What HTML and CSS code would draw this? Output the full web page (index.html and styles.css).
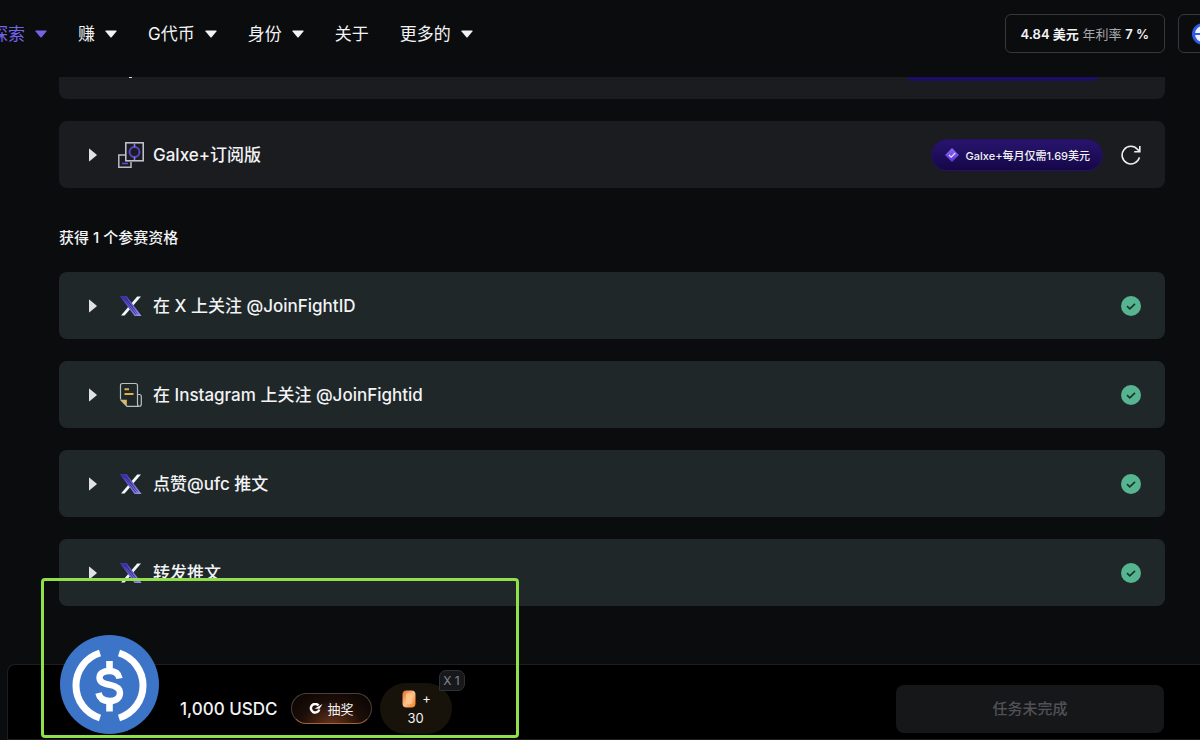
FILE: index.html
```html
<!DOCTYPE html>
<html lang="zh-CN">
<head>
<meta charset="utf-8">
<meta name="viewport" content="width=device-width, initial-scale=1">
<title>Galxe</title>
<link rel="stylesheet" href="styles.css">
</head>
<body>
<svg class="defs" aria-hidden="true">
  <defs>
    <linearGradient id="violet" x1="0" y1="0" x2="1" y2="1">
      <stop offset="0" stop-color="#3a2fae"/><stop offset="1" stop-color="#9a8df0"/>
    </linearGradient>
    <linearGradient id="gem" x1="0" y1="0" x2="0" y2="1">
      <stop offset="0" stop-color="#8a68f5"/><stop offset="1" stop-color="#5a35d8"/>
    </linearGradient>
    <linearGradient id="gold" x1="0" y1="0" x2="1" y2="1">
      <stop offset="0" stop-color="#e8682a"/><stop offset=".5" stop-color="#fcc088"/><stop offset="1" stop-color="#f07a1c"/>
    </linearGradient>
    <symbol id="caret-down" viewBox="0 0 12 8"><path d="M1 .6h10q1 0 .4.8L6.600 7.200q-.6.700-1.200 0L.6 1.400Q0 .6 1 .6z" fill="currentColor"/></symbol>
    <symbol id="caret-right" viewBox="0 0 8 14"><path d="M0 1.200q0-1 .8-.3l6.700 5.500q.6.600 0 1.200L.8 13.100q-.8.700-.8-.3z" fill="currentColor"/></symbol>
    <symbol id="x-logo" viewBox="0 0 22 22">
      <path d="M17.200 1.500H21L4.600 20.500H1z" fill="#f4f6fa"/>
      <path d="M1.200 1.800H6.200L20 20.300H15z" fill="#2c2a78" stroke="url(#violet)" stroke-width="1.600"/>
      <path d="M3.600 2.500L17.600 20" stroke="url(#violet)" stroke-width="1.200"/>
    </symbol>
    <symbol id="done" viewBox="0 0 20 20">
      <circle cx="10" cy="10" r="10" fill="#56b491"/>
      <path d="M6 10.200l2.800 2.700 5.200-5" fill="none" stroke="#17352b" stroke-width="1.600"/>
    </symbol>
  </defs>
</svg>

<header class="topbar">
  <nav class="nav">
    <a class="nav-link nav-link--active" href="#">探索<svg class="caret-down"><use href="#caret-down"/></svg></a>
    <a class="nav-link" href="#">赚<svg class="caret-down"><use href="#caret-down"/></svg></a>
    <a class="nav-link" href="#">G代币<svg class="caret-down"><use href="#caret-down"/></svg></a>
    <a class="nav-link" href="#">身份<svg class="caret-down"><use href="#caret-down"/></svg></a>
    <a class="nav-link" href="#">关于</a>
    <a class="nav-link" href="#">更多的<svg class="caret-down"><use href="#caret-down"/></svg></a>
  </nav>
  <div class="account">
    <button class="box-button" type="button"><b>4.84 美元</b> <span>年利率</span> <b>7 %</b></button>
    <button class="box-button box-button--chain" type="button" aria-label="Base">
      <svg class="chain" viewBox="0 0 22 22"><circle cx="11" cy="11" r="9.500" fill="#f1f3ff" stroke="#2f5be8" stroke-width="3"/><path d="M2 11h18" stroke="#2f5be8" stroke-width="2"/></svg>
    </button>
  </div>
</header>

<main class="tasks">
  <section class="card card--cut"><span class="icon-tip"></span><span class="pill-edge"></span></section>

  <section class="card">
    <button class="toggle" type="button">
      <svg class="caret-right"><use href="#caret-right"/></svg>
      <svg class="icon" viewBox="0 0 28 28" fill="none">
        <path d="M8.500 14H1.800V26.200H14V21" stroke="#b9b9c8" stroke-width="1.500"/>
        <path d="M5 22.500h6" stroke="#5a4ddb" stroke-width="1.500"/>
        <rect x="8.800" y="1.800" width="17.400" height="18" stroke="#c9c9d6" stroke-width="1.500"/>
        <circle cx="17.500" cy="11" r="5" stroke="#5548cf" stroke-width="1.900"/>
        <path d="M17.500 2.500v3.500M17.500 16v3" stroke="#8a80e8" stroke-width="1.500"/>
      </svg>
      <span>Galxe+订阅版</span>
    </button>
    <div class="card-actions">
      <a class="pill" href="#">
        <svg class="gem" viewBox="0 0 14 14"><path d="M7 0l7 7-7 7-7-7z" fill="url(#gem)"/><path d="M4 7l2.200 2.200L10.200 5" fill="none" stroke="#e4dcff" stroke-width="1.200"/></svg>
        <span>Galxe+每月仅需1.69美元</span>
      </a>
      <button class="refresh" type="button" aria-label="刷新">
        <svg viewBox="0 0 20 20" fill="none" stroke="#eeeef2" stroke-width="1.600"><path d="M18.400 12.400A8.800 8.800 0 1 1 16.600 4.400L18.500 6.500"/><path d="M18.800 1v5.700h-5.600"/></svg>
      </button>
    </div>
  </section>

  <h2 class="section-title">获得 1 个参赛资格</h2>

  <div class="done-list">
    <section class="card card--done">
      <button class="toggle" type="button"><svg class="caret-right"><use href="#caret-right"/></svg><svg class="icon icon--x"><use href="#x-logo"/></svg><span>在 X 上关注 @JoinFightID</span></button>
      <svg class="done"><use href="#done"/></svg>
    </section>
    <section class="card card--done">
      <button class="toggle" type="button"><svg class="caret-right"><use href="#caret-right"/></svg>
        <svg class="icon" viewBox="0 0 28 28" fill="none">
          <path d="M3.500 18V4.500Q3.500 2.500 5.500 2.500H18.500Q20.500 2.500 20.500 4.500V23Q20.500 25.300 22.300 25.300H10L3.500 18.500" stroke="#b9c0c2" stroke-width="1.200"/>
          <path d="M20.500 13.500H22.500Q24.300 13.500 24.300 15.500V23Q24.300 25.300 22.300 25.300" stroke="#b9c0c2" stroke-width="1.200"/>
          <path d="M4 18.800h5.800V25z" fill="#e0b95c"/>
          <path d="M7.500 8.300h4.500M7.500 13h9" stroke="#e0b050" stroke-width="2"/>
        </svg><span>在 Instagram 上关注 @JoinFightid</span></button>
      <svg class="done"><use href="#done"/></svg>
    </section>
    <section class="card card--done">
      <button class="toggle" type="button"><svg class="caret-right"><use href="#caret-right"/></svg><svg class="icon icon--x"><use href="#x-logo"/></svg><span>点赞@ufc 推文</span></button>
      <svg class="done"><use href="#done"/></svg>
    </section>
    <section class="card card--done">
      <button class="toggle" type="button"><svg class="caret-right"><use href="#caret-right"/></svg><svg class="icon icon--x"><use href="#x-logo"/></svg><span>转发推文</span></button>
      <svg class="done"><use href="#done"/></svg>
    </section>
  </div>
</main>

<footer class="rewards">
  <svg class="coin" viewBox="0 0 99 99" fill="none" stroke="#fff" stroke-width="7">
    <circle cx="49.500" cy="49.500" r="49.500" fill="#3c75c8" stroke="none"/>
    <path d="M40 18A34 34 0 0 0 40 83M59 18A34 34 0 0 1 59 83"/>
    <path d="M59.500 43.500C58.500 38 55 36 49.500 36C43.500 36 39.500 38.500 39.500 42.800C39.500 47.500 44 48.500 50 49.800C56 51 60 52.800 60 57.800C60 63 56 66 49.500 66C43 66 39.500 63 38.500 58" stroke-width="6.400"/>
    <path d="M49.500 26v9M49.500 67v9.500" stroke-width="6.600"/>
  </svg>
  <strong class="amount">1,000 USDC</strong>
  <button class="raffle" type="button">
    <svg viewBox="0 0 14 12" fill="none" stroke="#fff"><path d="M9.500 2.500A4.300 4.300 0 1 0 10.300 6.500" stroke-width="2.500"/><path d="M5.500 5.800L13.500 1 10.500 5.800z" fill="#fff" stroke="none"/></svg>
    <span>抽奖</span>
  </button>
  <div class="points">
    <div class="points-top"><svg viewBox="0 0 14 18"><rect x=".5" y=".5" width="13" height="17" rx="4" fill="url(#gold)"/><rect x="4" y="3" width="6.500" height="11" rx="2" fill="#ffc98f" opacity=".7"/></svg><span>+</span></div>
    <span>30</span>
    <span class="multiplier">X 1</span>
  </div>
  <button class="submit" type="button" disabled>任务未完成</button>
</footer>
<div class="highlight"></div>
</body>
</html>
```
FILE: styles.css
```css
* { box-sizing: border-box; }

body {
  margin: 0;
  min-height: 100vh;
  display: flex;
  flex-direction: column;
  position: relative;
  overflow: hidden;
  background: #0b0c0e;
  color: #f2f3f5;
  font-family: Inter, "Noto Sans CJK SC", sans-serif;
  font-size: 17px;
}

svg { display: block; flex: none; }
button { font: inherit; color: inherit; background: none; border: 0; padding: 0; margin: 0; }
a { color: inherit; text-decoration: none; }
.defs { position: absolute; width: 0; height: 0; }

/* Top bar */
.topbar {
  height: 77px;
  padding-bottom: 10px;
  display: flex;
  align-items: center;
  justify-content: space-between;
}
.nav { display: flex; gap: 31px; margin-left: -9px; line-height: 24px; white-space: nowrap; }
.nav-link { display: flex; align-items: center; gap: 10px; }
.nav-link--active { color: #7464e8; }
.caret-down { width: 12px; height: 8px; }
.account { display: flex; gap: 13px; margin-right: -32px; }
.box-button {
  height: 39px;
  padding: 0 15px;
  border: 1px solid #37383c;
  border-radius: 6px;
  font-size: 13px;
  white-space: nowrap;
}
.box-button b { font-weight: 600; }
.box-button span { color: #a6a7ad; }
.box-button--chain { width: 54px; padding: 0 13px; }
.chain { width: 22px; height: 22px; }

/* Task cards */
.tasks { flex: 1; padding: 0 35px 58px 59px; }
.card {
  min-height: 67px;
  padding: 0 24px 0 30px;
  display: flex;
  align-items: center;
  justify-content: space-between;
  border-radius: 8px;
  background: #1b1c20;
}
.card--cut {
  min-height: 22px;
  margin-bottom: 22px;
  padding: 0 67px 0 70px;
  align-items: flex-start;
  border-radius: 0 0 8px 8px;
}
.icon-tip { width: 3px; height: 1px; background: #d8d8e0; }
.pill-edge { width: 190px; height: 4px; border-radius: 0 0 16px 16px; background: #1c0d62; }
.card--done { background: #1f2729; }
.toggle { display: flex; align-items: center; font-weight: 500; line-height: 24px; text-align: left; }
.caret-right { width: 8px; height: 14px; margin-right: 20px; color: #dfe1e6; }
.icon { width: 28px; height: 28px; margin-right: 8px; }
.icon--x { padding: 3px; }
.done { width: 20px; height: 20px; }
.card-actions { display: flex; align-items: center; gap: 18px; }
.pill {
  height: 32px;
  padding: 0 12px 0 13px;
  display: flex;
  align-items: center;
  gap: 7px;
  border: 1px solid #241260;
  border-radius: 16px;
  background: linear-gradient(#28146e, #150748);
  font-size: 11px;
  font-weight: 500;
  white-space: nowrap;
}
.gem { width: 14px; height: 14px; }
.refresh svg { width: 20px; height: 20px; }
.section-title { margin: 38px 0 22px; font-size: 15px; line-height: 24px; font-weight: 500; }
.done-list { display: grid; gap: 22px; }

/* Reward bar */
.rewards {
  height: 76px;
  margin-left: 7px;
  padding: 0 36px 0 52px;
  display: flex;
  align-items: flex-end;
  border: 1px solid #1d1e20;
  border-right: 0;
  border-radius: 8px 0 0 0;
  background: #000;
}
.coin { width: 99px; height: 99px; margin-bottom: 5px; }
.amount { margin: 0 13px 18px 21px; font-weight: 500; line-height: 24px; }
.raffle {
  height: 31px;
  margin-bottom: 15px;
  padding: 0 17px;
  display: flex;
  align-items: center;
  gap: 5px;
  border: 1px solid #4b4038;
  border-bottom-color: #a0643f;
  border-radius: 16px;
  background: radial-gradient(ellipse at 50% 110%, #6b351c, #1c0e08 55%, #050303);
  font-size: 13px;
}
.raffle svg { width: 14px; height: 12px; }
.points {
  position: relative;
  width: 72px;
  height: 51px;
  margin: 0 0 5px 8px;
  display: flex;
  flex-direction: column;
  align-items: center;
  justify-content: center;
  border-radius: 26px;
  background: #17130a;
  font-size: 13px;
  line-height: 20px;
}
.points-top { display: flex; gap: 6px; margin-left: 2px; }
.points-top svg { width: 14px; height: 18px; }
.points-top span { line-height: 16px; }
.multiplier {
  position: absolute;
  right: -13px;
  top: -13px;
  width: 26px;
  height: 21px;
  border: 1px solid #303136;
  border-radius: 7px 7px 7px 1px;
  background: #17181c;
  color: #85868c;
  font-size: 12px;
  line-height: 19px;
  text-align: center;
}
.submit {
  width: 268px;
  height: 48px;
  margin: 0 0 6px auto;
  padding-bottom: 3px;
  border-radius: 8px;
  background: #161719;
  color: #505158;
  font-size: 15px;
  font-weight: 500;
}

/* Marker frame drawn over the page */
.highlight {
  position: absolute;
  left: 41px;
  bottom: 2px;
  width: 478px;
  height: 160px;
  border: 3px solid #8fe04a;
  border-radius: 4px;
  pointer-events: none;
}
```
